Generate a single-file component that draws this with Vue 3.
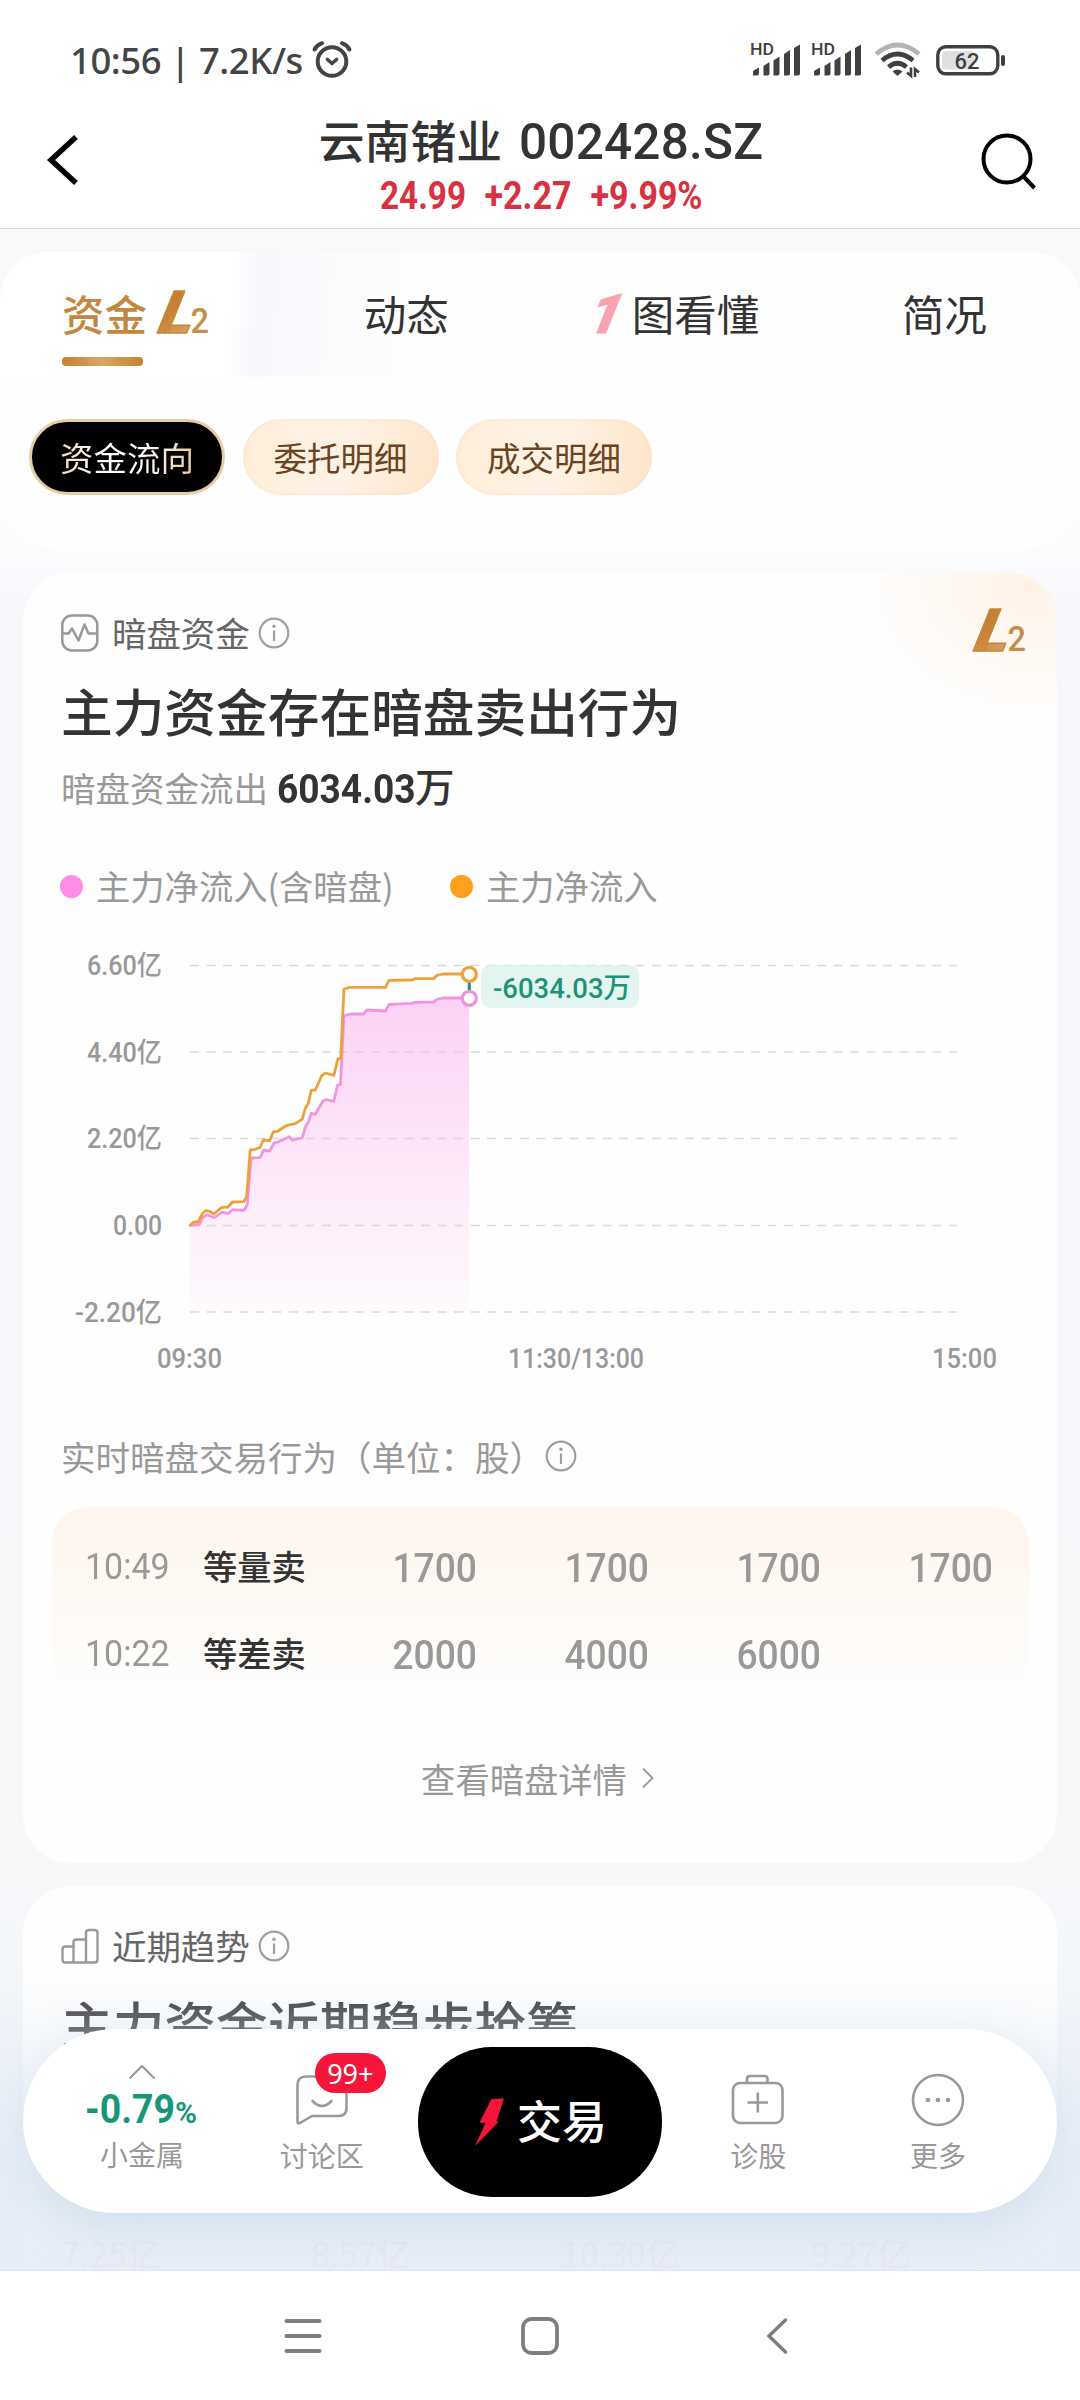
<script setup>
import { computed } from 'vue'

const tabs = [
  { label: '资金', kind: 'level2', active: true },
  { label: '动态' },
  { label: '图看懂', kind: 'one' },
  { label: '简况' }
]
const pills = ['资金流向', '委托明细', '成交明细']

const yTicks = [
  { y: 965.5, label: '6.60亿', w: 75 },
  { y: 1052, label: '4.40亿', w: 75 },
  { y: 1138.5, label: '2.20亿', w: 75 },
  { y: 1225.5, label: '0.00', w: 49 },
  { y: 1312, label: '-2.20亿', w: 87 }
]
const xTicks = [
  { x: 157, label: '09:30', w: 65 },
  { x: 508, label: '11:30/13:00', w: 136 },
  { x: 932, label: '15:00', w: 65 }
]

const mainFlow = [
  [189.5, 1226], [193, 1222.5], [198.5, 1221.5], [202.5, 1213.5], [206, 1210.5], [210, 1211.5],
  [213.8, 1214], [221.5, 1207.5], [228, 1207], [232.5, 1202], [243.7, 1201.7], [246.7, 1196.5],
  [250.2, 1150], [255, 1149.3], [260.2, 1147.5], [263.2, 1140], [269.7, 1140.7], [273.2, 1132],
  [277.5, 1131.3], [287, 1125.3], [295, 1123.7], [302.2, 1119.3], [305.3, 1108.3], [308.3, 1103.3],
  [311.3, 1090.3], [315.3, 1090], [321.8, 1075.7], [325.2, 1073], [333.9, 1075.3], [337.8, 1059],
  [340.8, 1058.7], [343.9, 989.3], [349.5, 987.3], [385.5, 987.3], [389, 980.3], [412, 980],
  [415, 978.7], [433.6, 978.7], [437, 975.3], [443.2, 974], [469.2, 974]
]
const darkFlow = [
  [189.5, 1225.3], [199.5, 1224.3], [203, 1217.7], [207.3, 1214.7], [214.2, 1217.7], [222, 1212.3],
  [228, 1213.7], [232.5, 1209.7], [244.1, 1210.3], [247.2, 1205], [251, 1158], [260.2, 1157.7],
  [263.7, 1150], [269.7, 1151], [274, 1143], [279.7, 1141.3], [289.3, 1136.7], [292.3, 1140],
  [302.2, 1138], [305.7, 1126], [308.3, 1122.3], [311.3, 1113.3], [315.3, 1114.3], [323.1, 1100.7],
  [326, 1099.7], [333.9, 1101.3], [337.4, 1085.3], [340.4, 1084.7], [343.9, 1016], [350.4, 1014],
  [363.4, 1014], [366.9, 1010], [385.5, 1011], [389, 1004.3], [412, 1003.3], [415, 1002.3],
  [433.6, 1002], [437, 999.3], [443.2, 998], [469.2, 998]
]
const toLine = (pts) => pts.map((p) => p.join(',')).join(' ')
const mainLine = computed(() => toLine(mainFlow))
const darkLine = computed(() => toLine(darkFlow))
const darkArea = computed(() => `${toLine(darkFlow)} 469.2,1312 189.5,1312`)

const orders = [
  { time: '10:49', name: '等量卖', lots: ['1700', '1700', '1700', '1700'] },
  { time: '10:22', name: '等差卖', lots: ['2000', '4000', '6000', ''] }
]
const trend = ['7.25亿', '8.57亿', '10.30亿', '9.27亿']
</script>

<template>
  <div class="screen">
    <header class="status">
      <span class="clock">10:56 | 7.2K/s</span>
      <svg class="alarm" width="42" height="40" viewBox="0 0 42 40" fill="none" stroke="#444" stroke-linecap="round">
        <circle cx="21" cy="21.500" r="14.300" stroke-width="4" />
        <path d="M3.500 9.500 Q6 5 11 3.200 M38.500 9.500 Q36 5 31 3.200" stroke-width="4" />
        <path d="M16.500 19.500 L21 23.500 L25.500 19.500" stroke-width="3.600" stroke-linejoin="round" />
      </svg>
      <span class="grow"></span>
      <svg v-for="n in 2" :key="n" class="signal" width="52" height="36" viewBox="0 0 52 36" fill="#404040">
        <text x="0" y="13" font-size="17" font-weight="500" textLength="24" lengthAdjust="spacingAndGlyphs">HD</text>
        <path d="M3 33.500v-4.500l6-3.500v6q0 2-2 2z M13.500 33.500v-9.500l6-4v11.500q0 2-2 2z M23.500 33.500v-15l6-4v17q0 2-2 2z M34 33.500v-21.500l6-4v23.500q0 2-2 2z M44 33.500v-27.500l6-3.500v29q0 2-2 2z" />
      </svg>
      <svg class="wifi" width="48" height="38" viewBox="0 0 48 38" fill="none" stroke-width="4.600">
        <path d="M2 13 Q23.500 -5 45 13" stroke="#b4b4b4" />
        <path d="M8 19.500 Q23.500 6.500 39 19.500" stroke="#404040" />
        <path d="M14.500 26 Q23.500 18.500 32.500 26" stroke="#404040" />
        <path d="M18.500 30.500 Q23.500 26.500 28.500 30.500 L23.500 35z" fill="#404040" stroke="none" />
        <path d="M37 26.500v8.500l-4-3.500 M41 36v-8l4 3.500" stroke="#404040" stroke-width="2.600" />
      </svg>
      <svg class="battery" width="70" height="32" viewBox="0 0 70 32">
        <rect x="1.800" y="2.800" width="60" height="27" rx="8" fill="#fff" stroke="#404040" stroke-width="3.400" />
        <rect x="6" y="7" width="32" height="18.500" rx="4" fill="#e0e0e0" />
        <rect x="65" y="11" width="4" height="11" rx="2" fill="#404040" />
        <text x="18.500" y="25" font-size="22.500" font-weight="500" fill="#404040" textLength="25" lengthAdjust="spacingAndGlyphs">62</text>
      </svg>
    </header>

    <div class="titlebar">
      <svg class="back" width="34" height="50" viewBox="0 0 34 50"><path d="M30 2 L5 25 L30 48" fill="none" stroke="#000" stroke-width="5.500" /></svg>
      <div class="stock">
        <div class="stock-name"><span>云南锗业</span><b class="code">002428.SZ</b></div>
        <svg class="quote" width="330" height="32" viewBox="375.500 180.500 330 32">
          <text x="379.500" y="209" textLength="86" lengthAdjust="spacingAndGlyphs">24.99</text>
          <text x="484" y="209" textLength="87" lengthAdjust="spacingAndGlyphs">+2.27</text>
          <text x="590" y="209" textLength="112" lengthAdjust="spacingAndGlyphs">+9.99%</text>
        </svg>
      </div>
      <svg class="search" width="58" height="60" viewBox="0 0 58 60" fill="none" stroke="#000" stroke-width="4"><circle cx="27" cy="27" r="23.500" /><path d="M43 44 L54.500 56" /></svg>
    </div>

    <main class="content">
      <section class="tabs-panel">
        <nav class="tabs">
          <div v-for="t in tabs" :key="t.label" class="tab" :class="{ active: t.active }">
            <svg v-if="t.kind === 'one'" class="one" width="40" height="44" viewBox="0 0 40 44"><text x="8" y="41.500" transform="skewX(-22)" font-size="55" font-weight="900">1</text></svg>
            <span>{{ t.label }}</span>
            <svg v-if="t.kind === 'level2'" class="level2" width="56" height="48" viewBox="0 0 56 48">
              <defs><linearGradient id="gold" x1="0" y1="0" x2=".4" y2="1"><stop offset="0" stop-color="#c17a2a" /><stop offset=".6" stop-color="#c98537" /><stop offset="1" stop-color="#d6a263" /></linearGradient></defs>
              <text class="big" x="18" y="45" transform="skewX(-22)" fill="url(#gold)" textLength="34" lengthAdjust="spacingAndGlyphs">L</text>
              <text class="small" x="36.500" y="45" textLength="18.500" lengthAdjust="spacingAndGlyphs">2</text>
            </svg>
          </div>
        </nav>
        <div class="pills">
          <button v-for="(p, i) in pills" :key="p" class="pill" :class="{ on: i === 0 }"><span>{{ p }}</span></button>
        </div>
      </section>

      <section class="card dark-card">
        <svg class="corner-logo" width="56" height="48" viewBox="0 0 56 48">
          <text class="big" x="18" y="45" transform="skewX(-22)" fill="url(#gold)" textLength="34" lengthAdjust="spacingAndGlyphs">L</text>
          <text class="small" x="37.500" y="45" textLength="18.500" lengthAdjust="spacingAndGlyphs">2</text>
        </svg>
        <div class="card-head">
          <svg width="38" height="38" viewBox="0 0 38 38" fill="none" stroke="#999" stroke-width="2.500"><rect x="1.300" y="1.500" width="35" height="35" rx="9.500" /><path d="M2 19.500h5.500l3.500-5 6.500 12 6-16 4 9h9" stroke-linejoin="round" /></svg>
          <h3>暗盘资金</h3>
          <svg width="32" height="32" viewBox="0 0 32 32" fill="none" stroke="#a0a0a0" stroke-width="2.200"><circle cx="16" cy="16" r="14.300" /><path d="M16 13.500v10.500" /><circle cx="16" cy="9.300" r="1.700" fill="#a0a0a0" stroke="none" /></svg>
        </div>
        <h2>主力资金存在暗盘卖出行为</h2>
        <p class="outflow"><span>暗盘资金流出</span><b class="din">6034.03</b><b class="unit">万</b></p>
        <div class="legend">
          <i class="dot pink"></i><span class="first">主力净流入(含暗盘)</span>
          <i class="dot orange"></i><span>主力净流入</span>
        </div>

        <svg class="chart" width="1034" height="450" viewBox="23 940 1034 450">
          <defs><linearGradient id="fade" x1="0" y1="0" x2="0" y2="1"><stop offset="0" stop-color="#fcd2f4" /><stop offset="1" stop-color="#fcd2f4" stop-opacity=".08" /></linearGradient></defs>
          <polygon :points="darkArea" fill="url(#fade)" />
          <line v-for="t in yTicks" :key="t.y" x1="190" x2="957" :y1="t.y" :y2="t.y" class="grid" />
          <text v-for="t in yTicks" :key="t.label" :x="162 - t.w" :y="t.y + 9.500" :textLength="t.w" lengthAdjust="spacingAndGlyphs" class="tick">{{ t.label }}</text>
          <text v-for="t in xTicks" :key="t.label" :x="t.x" y="1368" :textLength="t.w" lengthAdjust="spacingAndGlyphs" class="tick">{{ t.label }}</text>
          <polyline :points="darkLine" class="line" stroke="#f095e0" />
          <polyline :points="mainLine" class="line" stroke="#eda13a" />
          <line x1="469.300" x2="469.300" y1="974" y2="998" stroke="#1f9276" stroke-width="3" />
          <circle cx="469.300" cy="974.300" r="7" fill="#fff" stroke="#eda13a" stroke-width="3.200" />
          <circle cx="469.300" cy="998.300" r="7" fill="#fff" stroke="#ea92da" stroke-width="3.200" />
          <rect x="481" y="965" width="158" height="43" rx="9" fill="#d9f0ea" fill-opacity=".72" />
          <text x="493" y="998" textLength="138" lengthAdjust="spacingAndGlyphs" class="diff">-6034.03万</text>
        </svg>

        <div class="sub-head">
          <span>实时暗盘交易行为（单位：股）</span>
          <svg width="32" height="32" viewBox="0 0 32 32" fill="none" stroke="#a0a0a0" stroke-width="2.200"><circle cx="16" cy="16" r="14.300" /><path d="M16 13.500v10.500" /><circle cx="16" cy="9.300" r="1.700" fill="#a0a0a0" stroke="none" /></svg>
        </div>
        <div class="orders">
          <div v-for="o in orders" :key="o.time" class="order">
            <span class="time">{{ o.time }}</span>
            <span class="name">{{ o.name }}</span>
            <span v-for="(l, i) in o.lots" :key="i" class="lot">{{ l }}</span>
          </div>
        </div>
        <div class="more-link">
          <span>查看暗盘详情</span>
          <svg width="14" height="22" viewBox="0 0 14 22"><path d="M2 1.500 L11.500 11 L2 20.500" fill="none" stroke="#999" stroke-width="1.800" /></svg>
        </div>
      </section>

      <section class="card trend-card">
        <div class="card-head">
          <svg width="38" height="38" viewBox="0 0 38 38" fill="none" stroke="#999" stroke-width="2.400"><path d="M12.500 35.500h-8q-3 0-3-3v-10q0-3 3-3h8 M12.500 35.500v-20q0-3 3-3h9.500 M12.500 35.500h12.500 M25 35.500v-29.500q0-3 3-3h5.500q3 0 3 3v26.500q0 3-3 3z" /></svg>
          <h3>近期趋势</h3>
          <svg width="32" height="32" viewBox="0 0 32 32" fill="none" stroke="#a0a0a0" stroke-width="2.200"><circle cx="16" cy="16" r="14.300" /><path d="M16 13.500v10.500" /><circle cx="16" cy="9.300" r="1.700" fill="#a0a0a0" stroke="none" /></svg>
        </div>
        <h2>主力资金近期稳步抢筹</h2>
        <div class="trend"><span v-for="v in trend" :key="v">{{ v }}</span></div>
      </section>

      <div class="mist"></div>

      <div class="dock">
        <div class="dock-item sector">
          <svg width="28" height="16" viewBox="0 0 28 16"><path d="M1.500 14.500 L14 2 L26.500 14.500" fill="none" stroke="#999" stroke-width="2" /></svg>
          <svg class="pct" width="114" height="34" viewBox="86 2090 114 34">
            <text x="86" y="2123" font-size="41" textLength="90" lengthAdjust="spacingAndGlyphs">-0.79</text>
            <text x="176" y="2123" font-size="30" textLength="22" lengthAdjust="spacingAndGlyphs">%</text>
          </svg>
          <span>小金属</span>
        </div>
        <div class="dock-item">
          <svg width="54" height="54" viewBox="0 0 54 54" fill="none" stroke="#999" stroke-width="2.600" stroke-linejoin="round"><path d="M11 3.500h32q8.500 0 8.500 8.500v23q0 8-8 8h-26.500l-12 7q-2.500 1-2.500-1.500v-36.500q0-8.500 8.500-8.500z" /><path d="M17.500 28q9.500 10 19 0" stroke-linecap="round" /></svg>
          <em class="badge">99+</em>
          <span>讨论区</span>
        </div>
        <button class="trade">
          <svg width="32" height="50" viewBox="0 0 32 50"><path d="M18.500 2 L31 1.500 L23.500 24.500 L25.500 25 L2 49 L12.500 26 L6.500 25.500z" fill="#f5163a" /></svg>
          <span>交易</span>
        </button>
        <div class="dock-item">
          <svg width="54" height="54" viewBox="0 0 54 54" fill="none" stroke="#999" stroke-width="2.600"><rect x="2" y="10" width="49.500" height="40" rx="7" /><path d="M16 10v-4q0-3 3-3h14.500q3 0 3 3v4 M16.500 29.500h20.500 M26.800 19.500v20" /></svg>
          <span>诊股</span>
        </div>
        <div class="dock-item">
          <svg width="54" height="54" viewBox="0 0 54 54" fill="none" stroke="#999" stroke-width="2.600"><circle cx="27" cy="27" r="25" /><g fill="#999" stroke="none"><circle cx="17" cy="27" r="2.300" /><circle cx="27" cy="27" r="2.300" /><circle cx="37" cy="27" r="2.300" /></g></svg>
          <span>更多</span>
        </div>
      </div>
    </main>

    <footer class="sysnav">
      <svg width="38" height="40" viewBox="0 0 38 40" stroke="#7d7d7d" stroke-width="4" stroke-linecap="round"><path d="M2.500 5h33 M2.500 20h33 M2.500 35h33" /></svg>
      <svg width="38" height="40" viewBox="0 0 38 40"><rect x="2" y="3" width="34" height="34" rx="8.500" fill="none" stroke="#7d7d7d" stroke-width="3.800" /></svg>
      <svg class="nav-back" width="22" height="40" viewBox="0 0 22 40"><path d="M19.500 4 L3 20 L19.500 36" fill="none" stroke="#7d7d7d" stroke-width="3.400" stroke-linecap="round" /></svg>
    </footer>
  </div>
</template>

<style>
html, body { margin: 0; background: #fff; }
</style>

<style scoped>
* { box-sizing: border-box; }
.screen {
  width: 1080px;
  height: 2400px;
  display: flex;
  flex-direction: column;
  overflow: hidden;
  background: #fff;
  color: #333;
  font-family: "Noto Sans CJK SC", sans-serif;
}
svg { display: block; flex: none; overflow: visible; }
svg text { font-family: Roboto, "Noto Sans CJK SC", sans-serif; }
h2, h3, p { margin: 0; }
button { border: 0; padding: 0; font: inherit; }

.status { height: 120px; flex: none; display: flex; align-items: center; padding: 0 74px 0 70px; }
.clock { font: 500 36.5px/44px "Noto Sans", sans-serif; color: #444; width: 236px; white-space: nowrap; letter-spacing: -.45px; }
.alarm { margin-left: 5px; }
.grow { flex: 1; }
.signal { margin-right: 9px; }
.wifi { margin: 0 14px 0 2px; }

.titlebar { height: 109px; flex: none; display: flex; justify-content: space-between; align-items: flex-start; padding: 0 42px 0 46px; border-bottom: 1px solid #dadada; }
.back { margin-top: 15px; }
.search { margin-top: 12px; }
.stock { display: flex; flex-direction: column; align-items: center; margin-left: 22px; }
.stock-name { display: flex; align-items: baseline; gap: 17px; height: 60px; line-height: 38px; font-size: 45.8px; font-weight: 500; white-space: nowrap; }
.code { font: 500 49.5px/38px Roboto, sans-serif; letter-spacing: .2px; }
.quote text { font-size: 38.5px; font-weight: 700; fill: #d93140; }

.content { position: relative; height: 2041px; flex: none; overflow: hidden; padding-top: 23px; display: flex; flex-direction: column; background: linear-gradient(#f9f9f9 0, #f9f9f9 150px, #fdfdfe 280px, #fafcfe 320px, #f6f8fb 380px, #f6f8fa 1640px, #eef2f8 2041px); }
.tabs-panel { height: 298px; flex: none; border-radius: 48px 48px 60px 60px; background: #fefefe; overflow: hidden; }
.tabs { height: 125px; display: flex; align-items: flex-start; padding: 17px 93px 0 62px; justify-content: space-between; background: linear-gradient(96deg, #fff 0 235px, #f7f8fd 262px, #f9fafd 300px, #fdfdfe 400px, #fefefe 480px); }
.tab { position: relative; display: flex; align-items: center; height: 88px; font-size: 42.5px; line-height: 88px; white-space: nowrap; }
.tab.active { font-weight: 500; color: #c4873f; }
.tab.active::after { content: ""; position: absolute; left: 0; bottom: -9px; width: 81px; height: 9px; border-radius: 4px; background: linear-gradient(90deg, #c6822f, #d9a666 50%, #c6822f); }
.level2 { margin: -2px 11px 0 7px; }
.big { font-weight: 900; font-size: 59px; stroke: #c98537; stroke-width: 1.4px; stroke-linejoin: round; }
.small { font-size: 35px; font-weight: 500; fill: #c58d4c; }
.one text { fill: #f9a3b1; stroke: #f9a3b1; stroke-width: 1px; stroke-linejoin: round; }
.pills { display: flex; gap: 17.5px; padding: 42px 0 0 29px; }
.pill { width: 196px; height: 76px; border-radius: 38px; font-size: 33.5px; line-height: 72px; color: #6b4424; background: linear-gradient(100deg, #ffeeda, #fff3e6 50%, #fde5ca); box-shadow: inset 0 0 5px #fbdfc4; }
.pill.on { background: #000; border: 3px solid #e6cda3; line-height: 66px; box-shadow: none; }
.pill.on span { background: linear-gradient(90deg, #f6dfb8, #fff 35%, #fff 60%, #eccb98); -webkit-background-clip: text; background-clip: text; color: transparent; }

.card { position: relative; width: 1034px; flex: none; margin: 23px 0 0 23px; border-radius: 48px; background: #fefefe; }
.dark-card { height: 1290px; padding-top: 40px; background: radial-gradient(ellipse 170px 140px at 1010px 6px, #fff2e6, #fefefe); }
.corner-logo { position: absolute; left: 947px; top: 33px; }
.card-head { display: flex; align-items: center; height: 40px; padding-left: 38px; }
.card-head h3 { font-size: 34.5px; font-weight: 400; line-height: 36px; color: #666; margin: -2px 8px 0 13px; letter-spacing: -.1px; }
h2 { font-size: 51.7px; line-height: 60px; font-weight: 500; padding-left: 38px; margin-top: 27px; white-space: nowrap; }
.outflow { display: flex; align-items: center; height: 44px; margin-top: 25px; padding-left: 38px; font-size: 34.5px; line-height: 44px; color: #999; }
.outflow b { color: #333; font-weight: 500; }
.outflow .unit { font-size: 39.5px; margin-top: -5px; margin-left: -1px; }
.outflow .din { font: 700 41px/44px Roboto, sans-serif; width: 139px; margin: 3px 0 0 9px; transform: scaleX(.905); transform-origin: left; }
.legend { display: flex; align-items: center; height: 40px; margin-top: 56px; padding-left: 37px; font-size: 34.3px; line-height: 36px; color: #999; white-space: nowrap; }
.dot { width: 23px; height: 23px; border-radius: 50%; margin: 2px 13px 0 0; }
.dot.pink { background: #ff8de6; }
.dot.orange { background: #ff9f1a; }
.legend .first { width: 354px; }
.chart { margin-top: 35px; }
.grid { stroke: #d4d4d4; stroke-opacity: .85; stroke-width: 1.6; stroke-dasharray: 9 7.5; }
.tick { font-size: 27px; font-weight: 500; fill: #999; }
.line { fill: none; stroke-width: 2.8; stroke-linejoin: round; }
.diff { font-size: 28px; font-weight: 500; fill: #1f9276; }
.sub-head { display: flex; align-items: center; height: 40px; margin-top: 46px; padding-left: 38px; font-size: 34.5px; line-height: 36px; color: #999; }
.sub-head svg { margin-left: 1px; }
.orders { width: 977px; height: 205px; margin: 31px 0 0 29px; padding: 16px 0 0 33px; border-radius: 36px; background: linear-gradient(#fef5ec, #fefaf5 50%, #fefefe 96%); }
.order { display: flex; height: 87px; align-items: center; white-space: nowrap; }
.time { width: 118px; font: 400 36.5px/44px Roboto, sans-serif; color: #999; transform: scaleX(.93); transform-origin: left; padding-top: 1px; }
.name { width: 102px; font-size: 34.3px; line-height: 44px; font-weight: 500; margin-top: -4px; }
.lot { width: 172px; text-align: right; font: 500 40px/44px Roboto, sans-serif; color: #999; transform: scaleX(.93); transform-origin: right; padding-top: 4px; }
.more-link { display: flex; align-items: center; justify-content: center; height: 40px; margin-top: 46px; gap: 14px; padding-right: 4px; font-size: 34.3px; line-height: 36px; color: #999; }

.trend-card { height: 460px; padding-top: 40px; }
.trend { display: grid; grid-template-columns: repeat(4, 250px); padding: 174px 0 0 38px; font-size: 34px; line-height: 52px; color: #f0a8c0; }
.mist { position: absolute; left: 0; right: 0; bottom: 0; height: 300px; background: linear-gradient(rgba(230, 237, 247, 0), rgba(230, 237, 247, .3) 60px, rgba(230, 237, 247, .88) 220px, rgba(230, 237, 247, .93)); }

.dock { position: absolute; left: 23px; top: 1800px; width: 1034px; height: 184px; border-radius: 92px; background: #fff; box-shadow: 0 14px 46px rgba(170, 200, 222, .38); display: flex; padding: 0 29px; }
.dock-item { position: relative; width: 180px; display: flex; flex-direction: column; align-items: center; padding-top: 44px; font-size: 28px; line-height: 34px; color: #999; }
.dock-item span { margin-top: 11px; }
.dock-item.sector { padding-top: 35px; }
.sector span { margin-top: 13px; }
.pct { margin-top: 10px; }
.pct text { font-weight: 700; fill: #18967a; }
.badge { position: absolute; left: 83px; top: 24px; width: 71px; height: 40px; border-radius: 20px; background: #f5163a; color: #fff; font: 400 27px/41px "Noto Sans", sans-serif; text-align: center; }
.trade { width: 245px; height: 150px; margin: 18px 6px 0; border-radius: 74px; background: #000; color: #fff; display: flex; align-items: center; justify-content: center; gap: 12px; font-size: 45px; font-weight: 500; }
.trade span { margin-top: -6px; }

.sysnav { height: 130px; flex: none; display: flex; align-items: center; padding: 0 0 0 284px; gap: 199px; border-top: 1px solid #e2e3e8; background: #fff; }
.nav-back { margin-left: 8px; }
</style>
